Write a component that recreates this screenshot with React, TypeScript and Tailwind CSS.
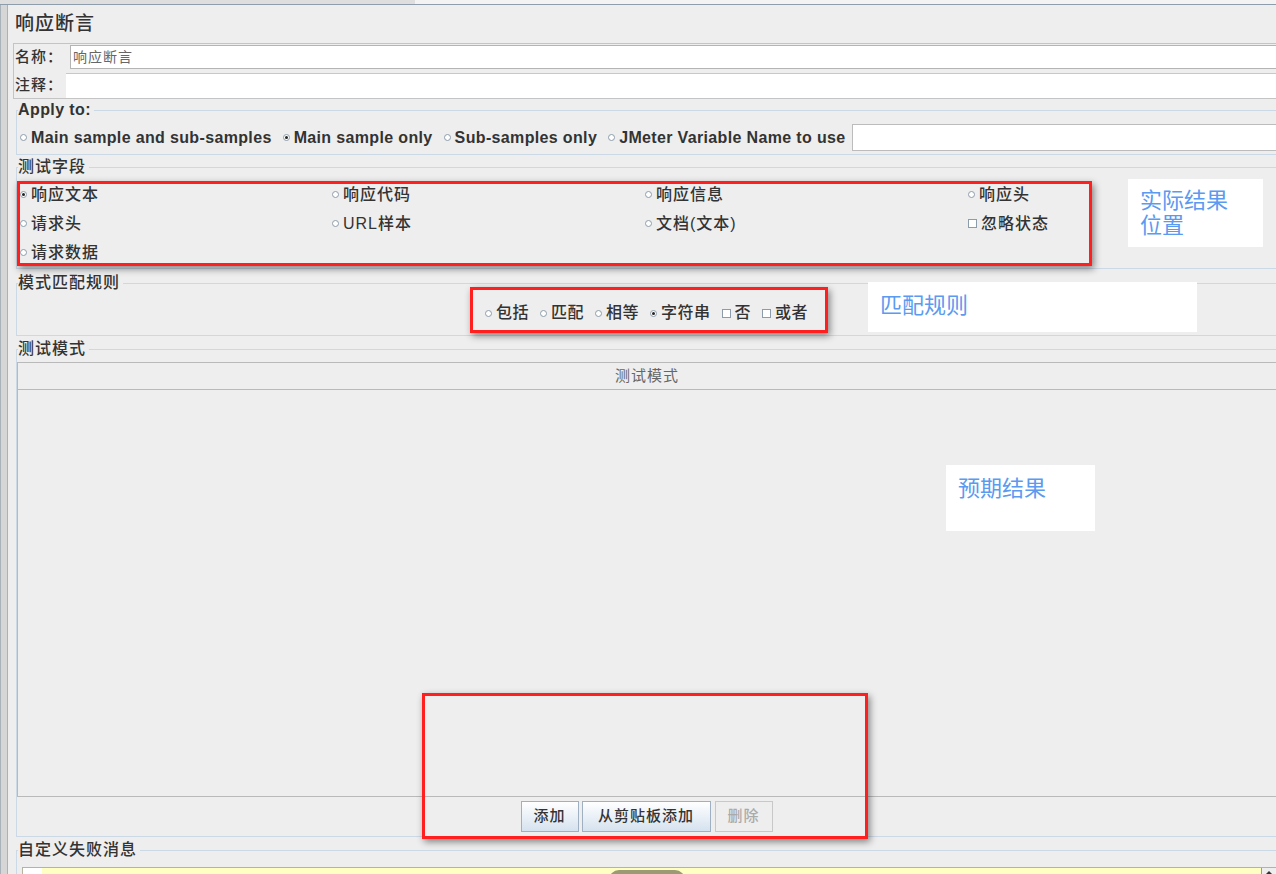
import React from 'react';

const FONT = "font-['Liberation_Sans','Noto_Sans_CJK_SC',sans-serif]";

function Radio({ checked = false }: { checked?: boolean }) {
  return (
    <span className="flex h-[7px] w-[7px] shrink-0 items-center justify-center rounded-full border border-[#8d9cab] bg-white">
      {checked && <span className="h-[3px] w-[3px] rounded-full bg-[#222]" />}
    </span>
  );
}

function Check() {
  return <span className="h-[9px] w-[9px] shrink-0 border border-[#8d9cab] bg-white" />;
}

function Opt({ label, checked, box }: { label: string; checked?: boolean; box?: boolean }) {
  return (
    <span className="flex items-center gap-[4px] whitespace-nowrap">
      {box ? <Check /> : <Radio checked={checked} />}
      <span>{label}</span>
    </span>
  );
}

// titled border in the Swing style
function Group({ title, className, children }: { title: string; className: string; children: React.ReactNode }) {
  return (
    <fieldset className={`ml-[3px] border border-r-0 border-[#cbd8e6] ${className}`}>
      <legend className="ml-[1px] h-[18px] pr-[3px] text-[16px] leading-[18px] font-medium tracking-[1px] text-[#333]">{title}</legend>
      {children}
    </fieldset>
  );
}

function Note({ className, children }: { className: string; children: React.ReactNode }) {
  return (
    <div className={`absolute bg-white px-[12px] text-[22px] leading-[25px] text-[#5a9af0] ${className}`}>{children}</div>
  );
}

function RedBox({ className }: { className: string }) {
  return <div className={`absolute border-[3px] border-[#ff1f1f] shadow-[2px_3px_7px_rgba(0,0,0,0.45)] ${className}`} />;
}

const fields: { label: string; checked?: boolean; box?: boolean }[][] = [
  [{ label: '响应文本', checked: true }, { label: '响应代码' }, { label: '响应信息' }, { label: '响应头' }],
  [{ label: '请求头' }, { label: 'URL样本' }, { label: '文档(文本)' }, { label: '忽略状态', box: true }],
  [{ label: '请求数据' }],
];

export default function App() {
  return (
    <div className={`relative flex h-[874px] w-[1276px] flex-col overflow-hidden bg-[#eeeeee] text-[#333] ${FONT}`}>
      {/* tab strip remnant */}
      <div className="flex h-[5px] shrink-0 border-b border-[#8d9dab]">
        <div className="w-[415px] bg-[#dedede]" />
        <div className="flex-1 bg-[#f3f3f3]" />
      </div>

      <div className="flex flex-1">
        <div className="w-[8px] shrink-0 border-x border-[#a9b1b9] bg-[#d6d6d6]" />

        <main className="flex flex-1 flex-col pl-[5px]">
          <h1 className="flex h-[38px] items-center pl-[2px] text-[19px] font-medium tracking-[1px] text-[#333]">响应断言</h1>

          {/* name / comment */}
          <div className="flex h-[56px] flex-col border border-r-0 border-[#c4c4c4] pt-[1px]">
            <div className="flex h-[24px] items-center">
              <span className="w-[56px] pl-[1px] text-[15px] font-medium tracking-[1px]">名称：</span>
              <div className="flex h-[24px] flex-1 items-center border border-r-0 border-[#b4b4b4] bg-white pl-[2px] text-[14px] tracking-[1px] text-[#666]">
                响应断言
              </div>
            </div>
            <div className="mt-[4px] flex h-[25px] items-center">
              <span className="w-[52px] pl-[1px] text-[15px] font-medium tracking-[1px]">注释：</span>
              <div className="h-[25px] flex-1 border-t border-[#c8c8c8] bg-white" />
            </div>
          </div>

          {/* Apply to */}
          <fieldset className="mt-[2px] ml-[3px] border border-r-0 border-[#cbd8e6] pb-[3px]">
            <legend className="ml-[1px] h-[18px] pr-[3px] text-[16px] leading-[18px] font-bold tracking-[0.4px] text-[#333]">Apply to:</legend>
            <div className="mt-[5px] flex h-[27px] items-center pl-[3px] text-[16px] font-bold tracking-[0.35px]">
              <Opt label="Main sample and sub-samples" />
              <span className="ml-[11px]"><Opt label="Main sample only" checked /></span>
              <span className="ml-[11px]"><Opt label="Sub-samples only" /></span>
              <span className="ml-[11px]"><Opt label="JMeter Variable Name to use" /></span>
              <div className="ml-[6px] h-[27px] flex-1 border border-r-0 border-[#bcbcbc] bg-white" />
            </div>
          </fieldset>

          <Group title="测试字段" className="mt-[3px] pb-[1px]">
            <div className="mt-[4px] grid grid-cols-[312px_313px_323px_1fr] pl-[3px] text-[16px] font-medium tracking-[1px]">
              {fields.map((row, i) =>
                [0, 1, 2, 3].map((c) => (
                  <div key={`${i}-${c}`} className="flex h-[29px] items-center">
                    {row[c] && <Opt {...row[c]} />}
                  </div>
                ))
              )}
            </div>
          </Group>

          <Group title="模式匹配规则" className="mt-[5px]">
            <div className="flex h-[43px] items-center justify-center gap-[11px] pb-[1px] text-[16px] font-medium tracking-[0.5px]">
              <Opt label="包括" />
              <Opt label="匹配" />
              <Opt label="相等" />
              <Opt label="字符串" checked />
              <Opt label="否" box />
              <Opt label="或者" box />
            </div>
          </Group>

          <Group title="测试模式" className="mt-[4px] pb-[4px]">
            <div className="mt-[4px] flex h-[435px] flex-col border-t border-b border-l border-[#b9b9b9]">
              <div className="flex h-[27px] items-center justify-center border-b border-[#b9b9b9] text-[15px] tracking-[1px] text-[#666]">测试模式</div>
              <div className="flex-1" />
            </div>
            <div className="mt-[4px] flex h-[31px] justify-center gap-[3px] text-[15px] font-medium tracking-[1px]">
              <button className="w-[58px] border border-[#9fb0c2] bg-gradient-to-b from-white to-[#d5e2ef] text-[#333]">添加</button>
              <button className="w-[129px] border border-[#9fb0c2] bg-gradient-to-b from-white to-[#d5e2ef] text-[#333]">从剪贴板添加</button>
              <button className="ml-[1px] w-[58px] border border-[#c8c8c8] bg-[#eeeeee] text-[#aaaaaa]">删除</button>
            </div>
          </Group>

          <Group title="自定义失败消息" className="mt-[4px] flex-1">
            <div className="mt-[8px] ml-[5px] flex h-[20px] border-t border-l border-[#b4b4a0]">
              <div className="w-[19px] bg-white" />
              <div className="flex-1 bg-[#ffffc4]" />
              <div className="flex w-[15px] justify-center border-l border-[#999] bg-[#eeeeee] pt-[3px]">
                <span className="h-0 w-0 border-x-[4px] border-b-[4px] border-x-transparent border-b-[#333]" />
              </div>
            </div>
          </Group>
        </main>
      </div>

      {/* annotations */}
      <RedBox className="left-[17px] top-[181px] h-[85px] w-[1075px]" />
      <RedBox className="left-[470px] top-[287px] h-[46px] w-[358px]" />
      <RedBox className="left-[422px] top-[693px] h-[146px] w-[446px]" />

      <Note className="left-[1128px] top-[179px] h-[68px] w-[135px] pt-[9px]">
        实际结果
        <br />
        位置
      </Note>
      <Note className="left-[868px] top-[282px] h-[50px] w-[329px] pt-[11px]">匹配规则</Note>
      <Note className="left-[946px] top-[465px] h-[66px] w-[149px] pt-[11px]">预期结果</Note>

      <div className="absolute left-[609px] top-[870px] h-[10px] w-[76px] rounded-t-full bg-[#9b9a72]" />
    </div>
  );
}
